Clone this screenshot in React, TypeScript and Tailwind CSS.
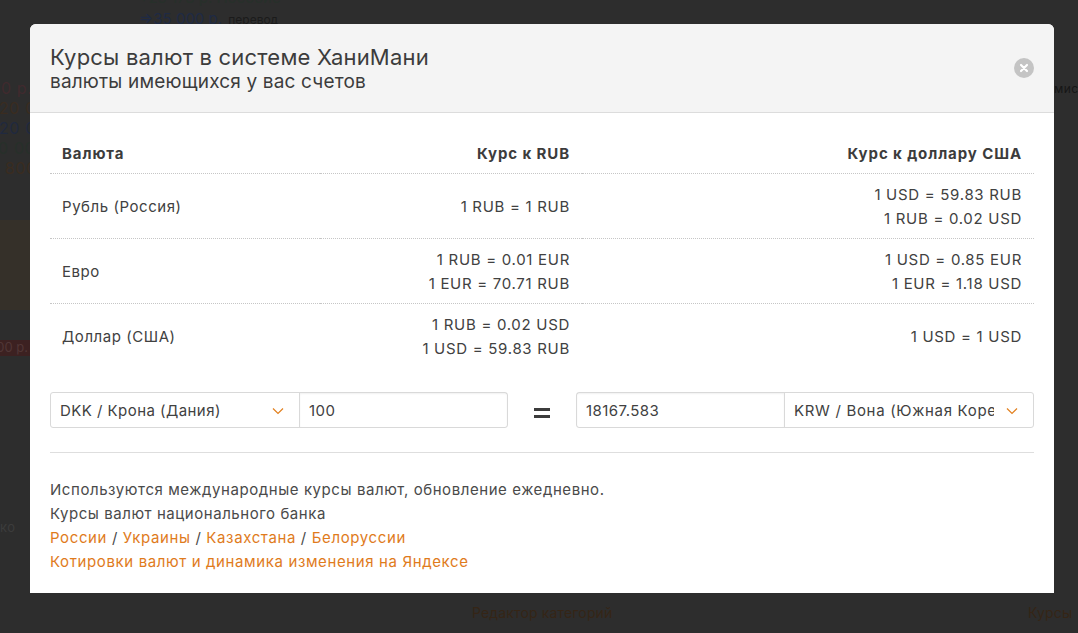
import React from "react";

const rows = [
  { name: "Рубль (Россия)", rub: ["1 RUB = 1 RUB"], usd: ["1 USD = 59.83 RUB", "1 RUB = 0.02 USD"] },
  { name: "Евро", rub: ["1 RUB = 0.01 EUR", "1 EUR = 70.71 RUB"], usd: ["1 USD = 0.85 EUR", "1 EUR = 1.18 USD"] },
  { name: "Доллар (США)", rub: ["1 RUB = 0.02 USD", "1 USD = 59.83 RUB"], usd: ["1 USD = 1 USD"] },
];

function Chevron() {
  return (
    <svg width="14" height="8" viewBox="0 0 14 8" fill="none" className="shrink-0">
      <path d="M2 1.5 L7 6.5 L12 1.5" stroke="#e2801f" strokeWidth="1.2" />
    </svg>
  );
}

function Backdrop() {
  return (
    <div className="absolute inset-0 text-[#1a1a1a]">
      <div className="absolute left-[139px] top-[-12px] leading-[20px]">
        <div className="text-[15px] text-[#27302a]">+25 173 р. Пособие</div>
        <div className="mt-[1px] whitespace-nowrap text-[15px] leading-[20px] text-[#1f2a44]">
          =&gt;35 000 р. <span className="ml-[2px] text-[12px] text-[#1b1b1b]">перевод</span>
        </div>
      </div>
      <div className="absolute left-[-30px] top-[78px] flex w-[90px] flex-col whitespace-nowrap text-[16px] leading-[20px] tracking-[0.6px]">
        <span className="pl-[31px] text-[#402a2e]">0 р.</span>
        <span className="pl-[29px] text-[#3a2c20]">20 000</span>
        <span className="pl-[29px] text-[#20293f]">20 000</span>
        <span className="pl-[21px] text-[#27302a]">10 000</span>
        <span className="pl-[35px] text-[#3a2c20]">800</span>
      </div>
      <div className="absolute left-0 top-[220px] h-[90px] w-[30px] bg-[#353029]" />
      <div className="absolute left-0 top-[340px] flex h-[16px] w-[30px] items-center justify-end overflow-hidden whitespace-nowrap bg-[#3c2121] pr-[2px] text-[13px] text-[#503636]">
        1 500 р.
      </div>
      <div className="absolute left-0 top-[518px] text-[13px] tracking-[0.4px] text-[#3c3c3c]">ко</div>
      <div className="absolute left-[1054px] top-[80px] text-[12px] tracking-[0.4px] text-[#161616]">мис</div>
      <div className="absolute left-[472px] top-[603px] text-[14px] leading-[20px] tracking-[0.15px] text-[#352516]">Редактор категорий</div>
      <div className="absolute left-[1028px] top-[603px] text-[14px] leading-[20px] tracking-[0.15px] text-[#352516]">Курсы</div>
    </div>
  );
}

export default function App() {
  return (
    <div className="relative h-[633px] w-[1078px] overflow-hidden bg-[#2d2d2d] font-['Inter',sans-serif]">
      <Backdrop />
      <div className="absolute inset-0 pl-[30px] pt-[24px]">
        <div className="h-[569px] w-[1024px] overflow-hidden rounded-t-[6px] bg-white text-[15px] leading-[24px] tracking-[0.55px] text-[#414141]">
          <div className="flex h-[89px] items-start justify-between border-b border-[#dcdcdc] bg-[#f4f4f4] px-[20px] pt-[19px]">
            <div>
              <div className="text-[22px] leading-[28px] tracking-[0.2px] text-[#3c3c3c]">Курсы валют в системе ХаниМани</div>
              <div className="text-[19px] leading-[22px] tracking-[0.17px] text-[#3c3c3c]">валюты имеющихся у вас счетов</div>
            </div>
            <div className="mt-[15px] flex h-[20px] w-[20px] items-center justify-center rounded-full bg-[#c4c4c4]">
              <svg width="10" height="10" viewBox="0 0 10 10">
                <path d="M2 2 L8 8 M8 2 L2 8" stroke="#fff" strokeWidth="2.2" strokeLinecap="round" />
              </svg>
            </div>
          </div>

          <div className="px-[20px] pt-[21px]">
            <table className="w-[984px] table-fixed border-separate border-spacing-0">
              <thead>
                <tr className="h-[40px] text-[#3c3c3c]">
                  <th className="w-[270px] border-b border-dotted border-[#c6c6c6] px-[12px] text-left font-bold tracking-[0.9px]">Валюта</th>
                  <th className="w-[262px] border-b border-dotted border-[#c6c6c6] px-[12px] text-right font-bold tracking-[0.9px]">Курс к RUB</th>
                  <th className="border-b border-dotted border-[#c6c6c6] px-[12px] text-right font-bold tracking-[0.9px]">Курс к доллару США</th>
                </tr>
              </thead>
              <tbody>
                {rows.map((r, i) => {
                  const line = i < rows.length - 1 ? "border-b border-dotted border-[#c6c6c6] pt-[1px]" : "";
                  return (
                    <tr key={r.name} className="h-[65px]">
                      <td className={`px-[12px] ${line}`}>{r.name}</td>
                      <td className={`px-[12px] text-right tracking-[0.7px] ${line}`}>
                        {r.rub.map((l) => (
                          <div key={l}>{l}</div>
                        ))}
                      </td>
                      <td className={`px-[12px] text-right tracking-[0.7px] ${line}`}>
                        {r.usd.map((l) => (
                          <div key={l}>{l}</div>
                        ))}
                      </td>
                    </tr>
                  );
                })}
              </tbody>
            </table>

            <div className="mt-[23px] flex items-center tracking-[0.45px]">
              <div className="flex h-[36px] w-[458px] rounded-[3px] border border-[#d9d9d9]">
                <div className="flex w-[249px] items-center justify-between border-r border-[#d9d9d9] pl-[9px] pr-[14px] pt-[1px]">
                  <span>DKK / Крона (Дания)</span>
                  <Chevron />
                </div>
                <div className="flex flex-1 items-center pl-[9px] pt-[1px] shadow-[inset_0_1px_2px_rgba(0,0,0,0.06)]">100</div>
              </div>
              <div className="flex w-[68px] justify-center">
                <div className="mt-[6px] flex w-[16px] flex-col gap-[4px]">
                  <div className="h-[3px] bg-[#3c3c3c]" />
                  <div className="h-[3px] bg-[#3c3c3c]" />
                </div>
              </div>
              <div className="flex h-[36px] w-[458px] rounded-[3px] border border-[#d9d9d9]">
                <div className="flex w-[208px] items-center border-r border-[#d9d9d9] pl-[9px] pt-[1px] shadow-[inset_0_1px_2px_rgba(0,0,0,0.06)]">18167.583</div>
                <div className="flex flex-1 items-center justify-between pl-[9px] pr-[14px] pt-[1px]">
                  <span className="w-[200px] overflow-hidden whitespace-nowrap tracking-[0.68px]">KRW / Вона (Южная Корея)</span>
                  <Chevron />
                </div>
              </div>
            </div>

            <div className="mt-[24px] border-t border-[#dedede] pt-[25px] text-[#4a4a4a]">
              <div className="tracking-[0.57px]">Используются международные курсы валют, обновление ежедневно.</div>
              <div>Курсы валют национального банка</div>
              <div className="tracking-[0.62px]">
                <a className="text-[#e07b1c]">России</a> / <a className="text-[#e07b1c]">Украины</a> /{" "}
                <a className="text-[#e07b1c]">Казахстана</a> / <a className="text-[#e07b1c]">Белоруссии</a>
              </div>
              <div className="tracking-[0.62px]">
                <a className="text-[#e07b1c]">Котировки валют и динамика изменения на Яндексе</a>
              </div>
            </div>
          </div>
        </div>
      </div>
    </div>
  );
}
